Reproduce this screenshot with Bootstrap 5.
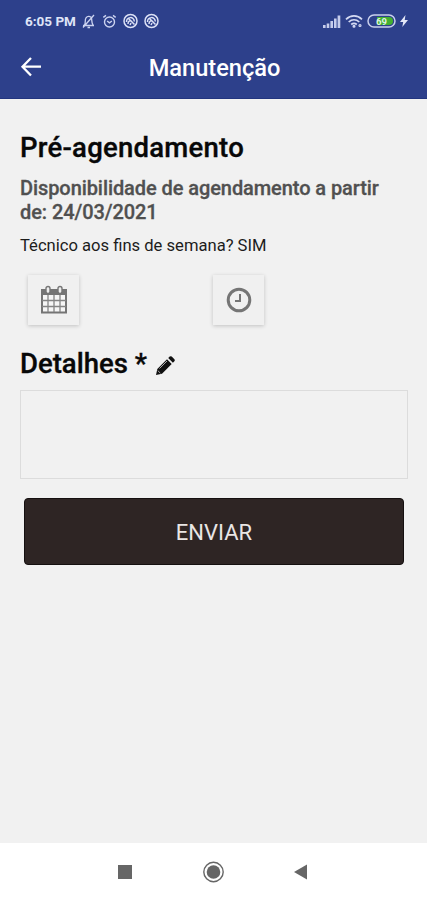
<!DOCTYPE html>
<html lang="pt-BR">
<head>
<meta charset="utf-8">
<meta name="viewport" content="width=device-width, initial-scale=1">
<title>Manutenção</title>
<link rel="stylesheet" href="https://cdn.jsdelivr.net/npm/bootstrap@5.3.0/dist/css/bootstrap.min.css">
<style>
body{font-family:Roboto,"Liberation Sans",sans-serif;background:#f1f1f1;color:#080808}
.screen{height:900px;overflow:hidden}
.top-area{background:#2d408b;height:99px;border-bottom:1px solid #22357f;color:#fff}
.status-row{height:42px;padding:0 19px 0 25px}
.status-icons{gap:6.3px}
.clock-text{font-size:13.5px;font-weight:700;line-height:16px;color:#dfe4f7;width:51px;white-space:nowrap}
.title-row{height:49px}
.back-btn{width:64px;padding-left:20px}
.page-title{font-size:23.6px;font-weight:500;line-height:28px;color:#fff;padding:3px 0 0 2px}
.content{padding:33px 19px 0 20px}
.big-title{font-size:27.5px;font-weight:500;line-height:32px;-webkit-text-stroke:.35px #080808;white-space:nowrap}
.main-title{letter-spacing:.25px}
.availability{font-size:20px;font-weight:500;line-height:23.5px;letter-spacing:-.08px;color:#505050;margin-top:13px;-webkit-text-stroke:.3px #505050}
.weekend{font-size:16.6px;line-height:20px;margin-top:12px;color:#1c1c1c}
.pickers{margin-top:19px;padding:0 10px 0 8px}
.picker{width:51px;height:50px;background:#f0f0f0;box-shadow:0 1px 4px rgba(0,0,0,.2)}
.details{margin-top:23px}
.details-box{height:89px;margin-top:10px;border:1.5px solid #dcdcdc;background:#f1f1f1;resize:none}
.send{height:67px;margin:19px 4px 0 4px;background:#2e2524;border:1px solid #151010;color:#e9e6e5;font-size:22px;line-height:26px;border-radius:4px}
.send span{display:block;padding-top:3px}
.send:hover{background:#2e2524;color:#e9e6e5}
.android-nav{height:57px;background:#fff;padding-right:2px}
</style>
</head>
<body>
<div class="screen d-flex flex-column">
<header class="top-area flex-shrink-0">
<div class="status-row d-flex align-items-center justify-content-between">
<div class="status-icons d-flex align-items-center">
<span class="clock-text">6:05 PM</span>
<svg width="13" height="15" viewBox="0 0 13 15" fill="none" stroke="#ccd3f0" stroke-width="1.3"><path d="M1 11.5h11M2.5 11C4 9 2.500 6 4 3.800 5.500 1.700 9 2 9.600 4.500 10 7 9.500 9 11 11M5.500 13.500h2.500M12 1 1 13.500"/></svg>
<svg width="15" height="15" viewBox="0 0 14 15" fill="none" stroke="#ccd3f0" stroke-width="1.4"><circle cx="7" cy="8" r="5"/><path d="M.8 3.400 3.500 1.400M13.200 3.400 10.500 1.400M4.600 7 7 8.800 9.400 7"/></svg>
<svg width="15" height="16" viewBox="0 0 15 16" fill="none" stroke="#dce1f6" stroke-width="1.5"><circle cx="7.500" cy="8" r="6.500"/><path d="M3.500 9C3.500 3.500 11 3 11.300 8.500M5 5l6.500 6.500M5 11c0-3 2-4 4-2.500M7 12l1-2"/></svg>
<svg width="15" height="16" viewBox="0 0 15 16" fill="none" stroke="#dce1f6" stroke-width="1.5"><circle cx="7.500" cy="8" r="6.500"/><path d="M3.500 9C3.500 3.500 11 3 11.300 8.500M5 5l6.500 6.500M5 11c0-3 2-4 4-2.500M7 12l1-2"/></svg>
</div>
<div class="d-flex align-items-center">
<svg width="18" height="13" viewBox="0 0 18 13" fill="#c6cdec"><path d="M0 10h2.600v3H0zM3.700 8.500h2.600V13H3.700zM7.400 6H10v7H7.400zM11 3.500h2.600V13H11zM14.600.500h2.700V13h-2.700z"/></svg>
<svg class="ms-1" width="18" height="14" viewBox="0 0 18 14" fill="none" stroke="#d4daf3" stroke-width="1.700"><path d="M1 5.300c4.700-4.500 11.300-4.500 16 0M3.700 8c3.200-3 7.400-3 10.600 0M6.200 10.500c1.700-1.500 3.900-1.500 5.600 0"/><circle cx="9" cy="12.300" r=".7"/><circle cx="15" cy="11.500" r="1" stroke-width="1.200"/></svg>
<svg class="ms-1" width="29" height="14" viewBox="0 0 29 14"><rect x="1" y="1" width="27" height="12" rx="6" fill="#2d408b" stroke="#c9d0ed" stroke-width="1.500"/><path d="M10 3h12a4 4 0 0 1 0 8H10z" fill="#43b02f"/><text x="9" y="10.500" font-family="Roboto, sans-serif" font-size="9.500" font-weight="700" fill="#dff3e6">69</text></svg>
<svg class="ms-1" width="8" height="12" viewBox="0 0 8 12" fill="#e4e8f8"><path d="M5.500 0 0 7h3.200L2.300 12 8 5H4.700z"/></svg>
</div>
</div>
<div class="title-row d-flex align-items-center">
<a class="back-btn" href="#" aria-label="Voltar"><svg class="d-block" width="22" height="20" viewBox="0 0 22 20" fill="none" stroke="#fff" stroke-width="2.300"><path d="M21 9.700H3M11 1 2.500 9.700 11 18.500"/></svg></a>
<h1 class="page-title flex-grow-1 text-center mb-0">Manutenção</h1>
<span class="back-btn"></span>
</div>
</header>
<main class="content flex-grow-1">
<h2 class="big-title main-title mb-0">Pré-agendamento</h2>
<p class="availability mb-0">Disponibilidade de agendamento a partir<br>de: 24/03/2021</p>
<p class="weekend mb-0">Técnico aos fins de semana? SIM</p>
<div class="pickers row g-0">
<div class="col-6"><button class="picker btn p-0 border-0 rounded-0 d-flex align-items-center justify-content-center" aria-label="Data">
<svg width="28" height="30" viewBox="0 0 28 30"><path d="M2 5h24v22.500H2z" fill="#f6f6f6" stroke="#757575" stroke-width="2"/><path d="M1 4.500h26V10H1z" fill="#757575"/><path d="M8 10v17M14 10v17M20 10v17M2 15.500h24M2 21.500h24" stroke="#858585" stroke-width="1.300"/><rect x="6" y="1.500" width="4" height="7" rx="2" fill="#eee" stroke="#757575" stroke-width="1.400"/><rect x="18" y="1.500" width="4" height="7" rx="2" fill="#eee" stroke="#757575" stroke-width="1.400"/></svg></button></div>
<div class="col-6"><button class="picker btn p-0 border-0 rounded-0 d-flex align-items-center justify-content-center" aria-label="Hora">
<svg width="26" height="26" viewBox="0 0 26 26" fill="none" stroke="#757575"><circle cx="13" cy="13" r="10.800" stroke-width="3"/><path d="M14 7v7H9" stroke-width="2"/></svg></button></div>
</div>
<div class="details d-flex align-items-center">
<label class="big-title" for="detalhes">Detalhes *</label>
<svg class="ms-2 mt-1" width="20" height="20" viewBox="0 0 20 20"><path d="m1 19 1.300-6L12 3.300 16.700 8 7 17.700zM13.200 2.100 14.700.600q1-.8 2 0L19.400 3.300q.8 1 0 2L17.900 6.800z" fill="#111"/><path d="m4.500 12.500 7.500-7.500M2.700 14.500l2.700 2.700" stroke="#aaa" stroke-width="1"/></svg>
</div>
<textarea id="detalhes" class="details-box form-control rounded-0"></textarea>
<div class="d-grid"><button class="send btn p-0"><span>ENVIAR</span></button></div>
</main>
<nav class="android-nav flex-shrink-0 d-flex align-items-center justify-content-center">
<svg width="190" height="24" viewBox="0 0 190 24" fill="#666"><path d="M0 5h14v14H0z"/><circle cx="95.500" cy="12" r="6.800"/><circle cx="95.500" cy="12" r="9.700" fill="none" stroke="#666" stroke-width="1.400"/><path d="M176 12 189 4.500v15z"/></svg>
</nav>
</div>
<script src="https://cdn.jsdelivr.net/npm/bootstrap@5.3.0/dist/js/bootstrap.bundle.min.js"></script>
</body>
</html>
